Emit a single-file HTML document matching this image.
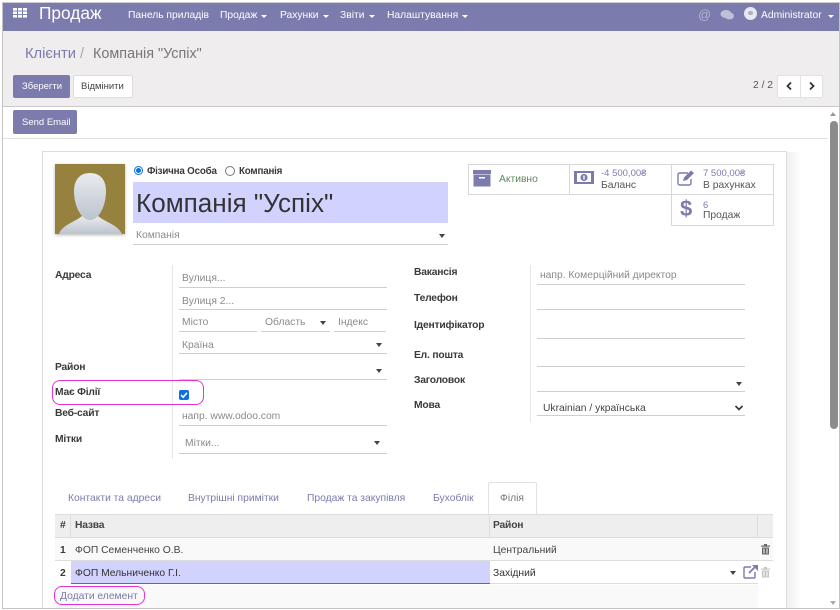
<!DOCTYPE html>
<html>
<head>
<meta charset="utf-8">
<style>
*{box-sizing:border-box}
html,body{margin:0;padding:0;width:840px;height:610px;overflow:hidden;background:#fff}
body{font-family:"Liberation Sans",sans-serif;font-size:10.3px;color:#4c4c4c;position:relative}
#w{position:absolute;left:0;top:0;width:840px;height:610px;filter:blur(.35px)}
.t{position:absolute;white-space:nowrap;line-height:12px;margin-top:1px}
.n{margin-top:0}
.b{font-weight:bold;color:#3a3a3a;letter-spacing:-.2px}
.p{color:#8a8a8a}
.l{position:absolute;height:1px;background:#cfcfcf}
.a{position:absolute;width:0;height:0;border-left:3.5px solid transparent;border-right:3.5px solid transparent;border-top:4px solid #444}
.w{position:absolute;width:0;height:0;border-left:3px solid transparent;border-right:3px solid transparent;border-top:3px solid #fff}
</style>
</head>
<body>
<div id="w">
<!-- navbar -->
<div style="position:absolute;left:3px;top:3px;width:836px;height:28px;background:#7c7bad"></div>
<svg style="position:absolute;left:13px;top:8px" width="15" height="10" fill="#fff"><rect x="0" y="0" width="4" height="2.6"/><rect x="5" y="0" width="4" height="2.6"/><rect x="10" y="0" width="4" height="2.6"/><rect x="0" y="3.5" width="4" height="2.6"/><rect x="5" y="3.5" width="4" height="2.6"/><rect x="10" y="3.5" width="4" height="2.6"/><rect x="0" y="7" width="4" height="2.6"/><rect x="5" y="7" width="4" height="2.6"/><rect x="10" y="7" width="4" height="2.6"/></svg>
<div class="t n" style="left:39px;top:3px;font-size:17.3px;line-height:20px;color:#fff">Продаж</div>
<div class="t n" style="left:128px;top:10px;color:#fff">Панель приладів</div>
<div class="t n" style="left:220px;top:10px;color:#fff">Продаж</div><div class="w" style="left:261px;top:15px"></div>
<div class="t n" style="left:280px;top:10px;color:#fff">Рахунки</div><div class="w" style="left:323px;top:15px"></div>
<div class="t n" style="left:340px;top:10px;color:#fff">Звіти</div><div class="w" style="left:369px;top:15px"></div>
<div class="t n" style="left:387px;top:10px;color:#fff">Налаштування</div><div class="w" style="left:462px;top:15px"></div>
<div class="t n" style="left:698px;top:9px;font-size:13px;color:#b5b4d0">@</div>
<svg style="position:absolute;left:720px;top:9px" width="15" height="12" fill="#c0bfd8"><ellipse cx="6" cy="5" rx="5.5" ry="4"/><ellipse cx="9.5" cy="7" rx="4.5" ry="3.5"/></svg>
<div style="position:absolute;left:744px;top:7px;width:13px;height:13px;border-radius:50%;background:#e8e8f0"></div>
<div style="position:absolute;left:748px;top:11px;width:5px;height:4px;border-radius:2px;background:#b0afc8"></div>
<div class="t" style="left:761px;top:9px;font-size:10.3px;color:#fff">Administrator</div><div class="w" style="left:828px;top:15px"></div>

<!-- control panel -->
<div style="position:absolute;left:3px;top:31px;width:836px;height:75px;background:#efeded"></div>
<div class="l" style="left:3px;top:106px;width:836px;background:#c9c9c9"></div>
<div class="t" style="left:25px;top:44px;font-size:14.7px;line-height:18px;color:#7c7bad">Клієнти</div>
<div class="t" style="left:80px;top:44px;font-size:14.7px;line-height:18px;color:#aaa">/</div>
<div class="t" style="left:93px;top:44px;font-size:14.4px;line-height:18px;color:#777">Компанія "Успіх"</div>
<div style="position:absolute;left:13px;top:75px;width:57px;height:23px;background:#7c7bad;border-radius:2px"></div>
<div class="t n" style="left:22px;top:81px;font-size:9.5px;color:#fff">Зберегти</div>
<div style="position:absolute;left:73px;top:75px;width:60px;height:23px;background:#fff;border:1px solid #ddd;border-radius:2px"></div>
<div class="t n" style="left:81px;top:81px;font-size:9.5px;color:#444">Відмінити</div>
<div class="t" style="left:753px;top:79px;color:#555">2 / 2</div>
<div style="position:absolute;left:777px;top:75px;width:46px;height:23px;background:#fff;border:1px solid #e2e2e2;border-radius:2px"></div>
<div class="l" style="left:800px;top:76px;width:1px;height:21px;background:#e2e2e2"></div>
<svg style="position:absolute;left:785px;top:81px" width="32" height="10" fill="none" stroke="#333" stroke-width="1.8"><path d="M6 1.5 L2.5 5 L6 8.5"/><path d="M25 1.5 L28.5 5 L25 8.5"/></svg>

<!-- statusbar row -->
<div style="position:absolute;left:13px;top:110px;width:64px;height:24px;background:#7c7bad;border-radius:2px"></div>
<div class="t" style="left:22px;top:116px;font-size:9.5px;color:#fff">Send Email</div>
<div class="l" style="left:3px;top:138px;width:825px;background:#e2e2e2"></div>

<!-- sheet bg -->
<div style="position:absolute;left:3px;top:139px;width:824px;height:469px;background:#fff"></div>
<div style="position:absolute;left:786px;top:152px;width:16px;height:456px;background:linear-gradient(to right,#efefef,#fff)"></div>
<div style="position:absolute;left:42px;top:151px;width:745px;height:460px;background:#fff;border:1px solid #dcdcdc"></div>

<!-- scrollbar -->
<div style="position:absolute;left:830px;top:112px;width:0;height:0;border-left:3.5px solid transparent;border-right:3.5px solid transparent;border-bottom:4px solid #999"></div>
<div style="position:absolute;left:830px;top:121px;width:8px;height:308px;background:#8c8c8c;border-radius:4px"></div>
<div style="position:absolute;left:830px;top:601px;width:0;height:0;border-left:3.5px solid transparent;border-right:3.5px solid transparent;border-top:4px solid #aaa"></div>

<!-- avatar -->
<svg style="position:absolute;left:55px;top:164px;box-shadow:0 1px 3px rgba(0,0,0,.3)" width="70" height="70">
<defs><linearGradient id="g" x1="0" y1="0" x2="0" y2="1"><stop offset="0" stop-color="#e9ebef"/><stop offset="1" stop-color="#bcc3cd"/></linearGradient></defs>
<rect width="70" height="70" fill="#97813f"/>
<path d="M4 70 C7 61 20 58 27 52 L43 52 C50 58 63 61 67 70 Z" fill="url(#g)"/>
<path d="M35 9 C46 9 51 17 51 27 C51 42 44 56 35 56 C26 56 19 42 19 27 C19 17 24 9 35 9 Z" fill="url(#g)"/>
</svg>

<!-- radios -->
<div style="position:absolute;left:134px;top:166px;width:9px;height:9px;border-radius:50%;background:#fff;border:1.5px solid #0a6fe8"></div>
<div style="position:absolute;left:136px;top:168px;width:5px;height:5px;border-radius:50%;background:#0a6fe8"></div>
<div class="t b" style="left:147px;top:165px;font-size:9.8px">Фізична Особа</div>
<div style="position:absolute;left:225px;top:166px;width:10px;height:10px;border-radius:50%;background:#fff;border:1px solid #777"></div>
<div class="t b" style="left:239px;top:165px;font-size:9.8px">Компанія</div>

<!-- name -->
<div style="position:absolute;left:133px;top:182px;width:315px;height:41px;background:#d2d2ff"></div>
<div class="t" style="left:136px;top:186px;font-size:26.1px;line-height:32px;color:#333">Компанія "Успіх"</div>
<div class="t p" style="left:136px;top:229px">Компанія</div>
<div class="a" style="left:439px;top:234px"></div>
<div class="l" style="left:133px;top:244px;width:315px"></div>

<!-- stat buttons -->
<div style="position:absolute;left:468px;top:164px;width:306px;height:31px;border:1px solid #d8d8d8"></div>
<div class="l" style="left:569px;top:164px;width:1px;height:31px;background:#d8d8d8"></div>
<div class="l" style="left:671px;top:164px;width:1px;height:62px;background:#d8d8d8"></div>
<div class="l" style="left:671px;top:225px;width:103px;background:#d8d8d8"></div>
<div class="l" style="left:773px;top:164px;width:1px;height:62px;background:#d8d8d8"></div>
<svg style="position:absolute;left:473px;top:170px" width="19" height="17" fill="#7c7bad"><rect x="0" y="0" width="18" height="4"/><rect x="0.5" y="4.5" width="17" height="12"/><rect x="6" y="7" width="6" height="1.5" fill="#fff"/></svg>
<div class="t" style="left:499px;top:173px;color:#5d8a5d">Активно</div>
<svg style="position:absolute;left:574px;top:171px" width="21" height="14"><rect x="0" y="0" width="20" height="13" fill="#7c7bad"/><rect x="3" y="2" width="14" height="9" fill="#fff"/><circle cx="10" cy="6.5" r="3.6" fill="#7c7bad"/><rect x="9.3" y="4.5" width="1.4" height="4" fill="#fff"/></svg>
<div class="t" style="left:601px;top:167px;font-size:9.5px;line-height:11px;color:#7c7bad">-4 500,00₴</div>
<div class="t" style="left:601px;top:179px;line-height:12px;color:#555">Баланс</div>
<svg style="position:absolute;left:676px;top:168px" width="20" height="19" fill="none" stroke="#7c7bad" stroke-width="1.4"><path d="M12 5 H4 Q2 5 2 7 V15 Q2 17 4 17 H13 Q15 17 15 15 V11"/><path d="M7 13 L8 9.5 L15 2.5 L18 5 L11 12 Z" fill="#7c7bad" stroke="none"/></svg>
<div class="t" style="left:703px;top:167px;font-size:9.5px;line-height:11px;color:#7c7bad">7 500,00₴</div>
<div class="t" style="left:703px;top:179px;line-height:12px;color:#555">В рахунках</div>
<div class="t" style="left:680px;top:197px;font-size:22px;line-height:22px;font-weight:bold;color:#7c7bad">$</div>
<div class="t" style="left:703px;top:199px;font-size:9.5px;line-height:11px;color:#7c7bad">6</div>
<div class="t" style="left:703px;top:209px;line-height:12px;color:#555">Продаж</div>

<!-- left group -->
<div class="l" style="left:172px;top:265px;width:1px;height:194px;background:#e6e6e6"></div>
<div class="t b" style="left:55px;top:269px">Адреса</div>
<div class="t p" style="left:182px;top:272px">Вулиця...</div>
<div class="l" style="left:179px;top:287px;width:208px"></div>
<div class="t p" style="left:182px;top:295px">Вулиця 2...</div>
<div class="l" style="left:179px;top:309px;width:208px"></div>
<div class="t p" style="left:182px;top:316px">Місто</div>
<div class="l" style="left:179px;top:331px;width:78px"></div>
<div class="t p" style="left:265px;top:316px">Область</div>
<div class="a" style="left:320px;top:321px"></div>
<div class="l" style="left:261px;top:331px;width:69px"></div>
<div class="t p" style="left:338px;top:316px">Індекс</div>
<div class="l" style="left:334px;top:331px;width:52px"></div>
<div class="t p" style="left:182px;top:339px">Країна</div>
<div class="a" style="left:376px;top:343px"></div>
<div class="l" style="left:179px;top:353px;width:208px"></div>
<div class="t b" style="left:55px;top:361px">Район</div>
<div class="a" style="left:376px;top:369px"></div>
<div class="l" style="left:179px;top:379px;width:208px"></div>
<div class="t b" style="left:55px;top:386px">Має Філії</div>
<div style="position:absolute;left:179px;top:390px;width:10px;height:10px;background:#0a6fe8;border-radius:2px"></div>
<svg style="position:absolute;left:179px;top:390px" width="10" height="10" fill="none" stroke="#fff" stroke-width="1.6"><path d="M2 5 L4.2 7.2 L8 2.8"/></svg>
<div style="position:absolute;left:52px;top:380px;width:152px;height:25px;border:1.5px solid #e332d8;border-radius:8px"></div>
<div class="t b" style="left:55px;top:407px">Веб-сайт</div>
<div class="t p" style="left:182px;top:410px">напр. www.odoo.com</div>
<div class="l" style="left:179px;top:425px;width:208px"></div>
<div class="t b" style="left:55px;top:433px">Мітки</div>
<div class="t p" style="left:185px;top:437px">Мітки...</div>
<div class="a" style="left:374px;top:441px"></div>
<div class="l" style="left:179px;top:453px;width:208px"></div>

<!-- right group -->
<div class="l" style="left:530px;top:265px;width:1px;height:157px;background:#e6e6e6"></div>
<div class="t b" style="left:414px;top:266px">Вакансія</div>
<div class="t p" style="left:540px;top:269px">напр. Комерційний директор</div>
<div class="l" style="left:537px;top:284px;width:208px"></div>
<div class="t b" style="left:414px;top:292px">Телефон</div>
<div class="l" style="left:537px;top:309px;width:208px"></div>
<div class="t b" style="left:414px;top:319px">Ідентифікатор</div>
<div class="l" style="left:537px;top:338px;width:208px"></div>
<div class="t b" style="left:414px;top:349px">Ел. пошта</div>
<div class="l" style="left:537px;top:366px;width:208px"></div>
<div class="t b" style="left:414px;top:374px">Заголовок</div>
<div class="a" style="left:736px;top:382px"></div>
<div class="l" style="left:537px;top:391px;width:208px"></div>
<div class="t b" style="left:414px;top:399px">Мова</div>
<div class="t" style="left:543px;top:402px;color:#444">Ukrainian / українська</div>
<svg style="position:absolute;left:734px;top:404px" width="10" height="8" fill="none" stroke="#333" stroke-width="1.6"><path d="M1.5 2 L5 5.5 L8.5 2"/></svg>
<div class="l" style="left:537px;top:415px;width:208px"></div>

<!-- tabs -->
<div class="t" style="left:68px;top:492px;color:#7c7bad">Контакти та адреси</div>
<div class="t" style="left:188px;top:492px;color:#7c7bad">Внутрішні примітки</div>
<div class="t" style="left:307px;top:492px;color:#7c7bad">Продаж та закупівля</div>
<div class="t" style="left:433px;top:492px;color:#7c7bad">Бухоблік</div>
<div style="position:absolute;left:488px;top:482px;width:49px;height:33px;background:#fff;border:1px solid #e2e2e2;border-bottom:none;border-radius:2px 2px 0 0"></div>
<div class="t" style="left:500px;top:492px;color:#777">Філія</div>

<!-- table -->
<div style="position:absolute;left:55px;top:514px;width:718px;height:24px;background:#eeeeee;border-top:1px solid #ddd;border-bottom:1px solid #ddd"></div>
<div class="l" style="left:70px;top:515px;width:1px;height:22px;background:#ddd"></div>
<div class="l" style="left:489px;top:515px;width:1px;height:22px;background:#ddd"></div>
<div class="l" style="left:757px;top:515px;width:1px;height:22px;background:#ddd"></div>
<div class="t b" style="left:60px;top:519px">#</div>
<div class="t b" style="left:75px;top:519px;color:#444">Назва</div>
<div class="t b" style="left:493px;top:519px;color:#444">Район</div>
<div style="position:absolute;left:55px;top:538px;width:718px;height:23px;background:#f9f9f9;border-bottom:1px solid #ddd"></div>
<div class="t b" style="left:60px;top:544px">1</div>
<div class="t" style="left:75px;top:544px;color:#444">ФОП Семенченко О.В.</div>
<div class="t" style="left:493px;top:544px;color:#444">Центральний</div>
<svg style="position:absolute;left:761px;top:544px" width="9" height="11" fill="#666"><rect x="0" y="1.5" width="9" height="1.2"/><rect x="3" y="0" width="3" height="1.5"/><path d="M1 3.5 H8 V10.5 H1 Z M2.5 4.5 V9.5 H3.5 V4.5 Z M5.5 4.5 V9.5 H6.5 V4.5 Z" fill-rule="evenodd"/></svg>
<div style="position:absolute;left:71px;top:561px;width:419px;height:23px;background:#d2d2ff;border-bottom:1px solid #3a76b0"></div>
<div style="position:absolute;left:490px;top:561px;width:268px;height:23px;background:#fff;border-bottom:1px solid #ddd"></div>
<div class="t b" style="left:60px;top:567px">2</div>
<div class="t" style="left:75px;top:567px;color:#333">ФОП Мельниченко Г.І.</div>
<div class="t" style="left:493px;top:567px;color:#333">Західний</div>
<div class="a" style="left:730px;top:571px"></div>
<svg style="position:absolute;left:743px;top:564px" width="16" height="15" fill="none" stroke="#7c7bad" stroke-width="1.4"><path d="M8 3 H2 Q1 3 1 4 V13 Q1 14 2 14 H11 Q12 14 12 13 V8"/><path d="M6 9 L13 2" stroke-width="1.8"/><path d="M9 1 H15 V7 Z" fill="#7c7bad" stroke="none"/></svg>
<svg style="position:absolute;left:761px;top:567px" width="9" height="11" fill="#c4c4c4"><rect x="0" y="1.5" width="9" height="1.2"/><rect x="3" y="0" width="3" height="1.5"/><path d="M1 3.5 H8 V10.5 H1 Z M2.5 4.5 V9.5 H3.5 V4.5 Z M5.5 4.5 V9.5 H6.5 V4.5 Z" fill-rule="evenodd"/></svg>
<div style="position:absolute;left:55px;top:585px;width:703px;height:23px;background:#f9f9f9"></div>
<div class="t" style="left:60px;top:590px;color:#7c7bad">Додати елемент</div>
<div style="position:absolute;left:54px;top:586px;width:91px;height:19px;border:1.5px solid #e332d8;border-radius:8px"></div>

<!-- frame -->
<div style="position:absolute;left:0;top:608px;width:840px;height:2px;background:#fff"></div>
<div class="l" style="left:2px;top:608px;width:838px;background:#c4c4c4"></div>
<div class="l" style="left:2px;top:2px;width:838px;background:#ccc"></div>
<div class="l" style="left:2px;top:2px;width:1px;height:606px;background:#c4c4c4"></div>
<div class="l" style="left:839px;top:2px;width:1px;height:606px;background:#c4c4c4"></div>
</div>
</body>
</html>
